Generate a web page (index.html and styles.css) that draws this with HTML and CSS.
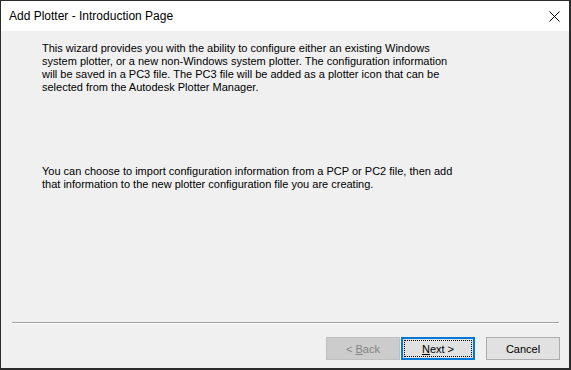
FILE: index.html
```html
<!DOCTYPE html>
<html lang="en">
<head>
  <meta charset="UTF-8">
  <title>Add Plotter - Introduction Page</title>
  <link rel="stylesheet" href="styles.css">
</head>
<body>
  <div class="window">
    <div class="titlebar">
      <span class="title">Add Plotter - Introduction Page</span>
      <span class="close">
        <svg width="11" height="11" viewBox="0 0 11 11"><path d="M0.5 0.5 L10.5 10.5 M10.5 0.5 L0.5 10.5" stroke="#000" stroke-width="1"/></svg>
      </span>
    </div>
    <div class="content">
      <p class="intro">This wizard provides you with the ability to configure either an existing Windows<br>system plotter, or a new non-Windows system plotter. The configuration information<br>will be saved in a PC3 file. The PC3 file will be added as a plotter icon that can be<br>selected from the Autodesk Plotter Manager.</p>
      <p class="import">You can choose to import configuration information from a PCP or PC2 file, then add<br>that information to the new plotter configuration file you are creating.</p>
    </div>
    <div class="separator"></div>
    <div class="buttons">
      <button class="btn disabled">&lt; <u>B</u>ack</button>
      <button class="btn default"><span class="focus"><u>N</u>ext &gt;</span></button>
      <button class="btn cancel">Cancel</button>
    </div>
  </div>
</body>
</html>
```
FILE: styles.css
```css
html, body { margin: 0; padding: 0; }
body { background: #f0f0f0; font-family: "Liberation Sans", Arial, sans-serif; }
.window {
  width: 571px;
  height: 370px;
  box-sizing: border-box;
  border: 1px solid #2b2b2b;
  border-bottom-width: 2px;
  border-right-width: 2px;
  background: #f0f0f0;
  display: flex;
  flex-direction: column;
}
.titlebar {
  height: 30px;
  background: #fff;
  display: flex;
  align-items: center;
  justify-content: space-between;
  padding: 0 9px 0 8px;
}
.title { font-size: 12px; color: #000; }
.close { display: flex; width: 11px; height: 11px; }
.content {
  flex: 1;
  padding: 11px 0 0 41px;
  font-size: 11px;
  line-height: 13px;
  color: #000;
}
.content p { margin: 0; }
.import { margin-top: 71px !important; }
.separator {
  margin: 0 10px 0 11px;
  height: 1px;
  background: #a0a0a0;
  border-bottom: 1px solid #fff;
}
.buttons {
  display: flex;
  justify-content: flex-end;
  padding: 13px 9px 8px 0;
}
.btn {
  width: 74px;
  height: 23px;
  box-sizing: border-box;
  font-family: "Liberation Sans", Arial, sans-serif;
  font-size: 11px;
  border: 1px solid #adadad;
  background: #e1e1e1;
  color: #000;
  padding: 0;
  margin-left: 0;
}
.disabled { background: #cccccc; border-color: #bfbfbf; color: #838383; }
.default { margin-left: 1px; border: 2px solid #0078d7; padding: 1px; }
.focus {
  display: flex;
  align-items: center;
  justify-content: center;
  height: 100%;
  box-sizing: border-box;
  border: 1px dotted #000;
}
.cancel { margin-left: 11px; }
```
